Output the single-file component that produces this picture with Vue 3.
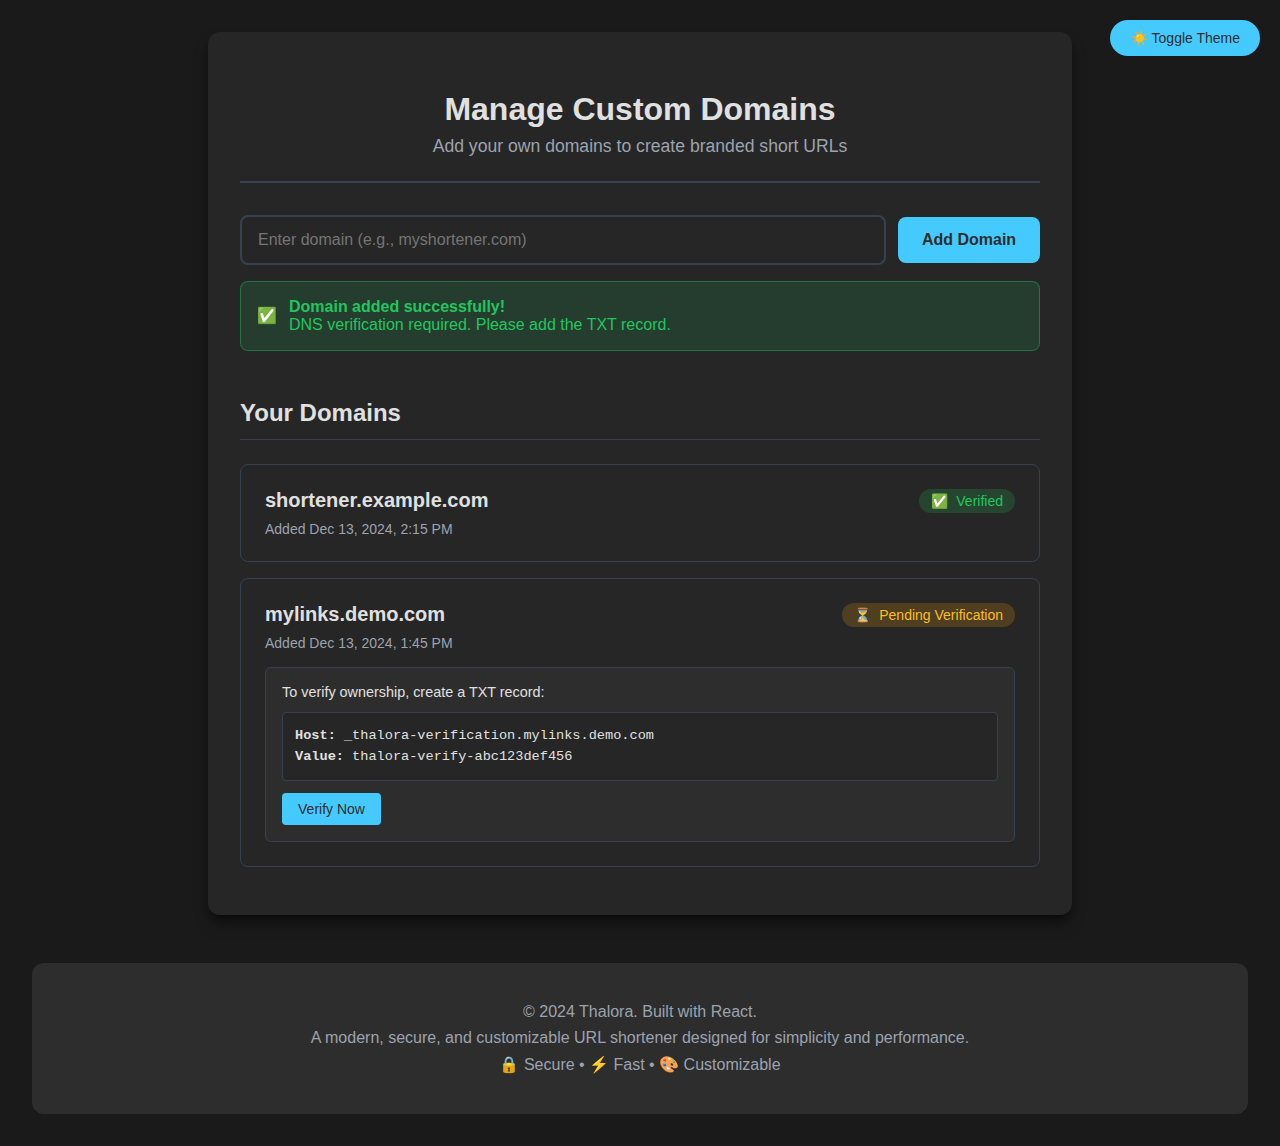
<script setup>
const domains = [
  { name: 'shortener.example.com', added: 'Added Dec 13, 2024, 2:15 PM', status: 'verified', icon: '✅', label: 'Verified' },
  {
    name: 'mylinks.demo.com', added: 'Added Dec 13, 2024, 1:45 PM', status: 'pending', icon: '⏳', label: 'Pending Verification',
    host: '_thalora-verification.mylinks.demo.com', value: 'thalora-verify-abc123def456'
  }
]
</script>

<template>
  <div class="page">
    <button class="toggle">☀️ Toggle Theme</button>
    <main class="panel">
      <header class="head">
        <h1>Manage Custom Domains</h1>
        <p>Add your own domains to create branded short URLs</p>
      </header>
      <form class="add" @submit.prevent>
        <input type="text" placeholder="Enter domain (e.g., myshortener.com)">
        <button>Add Domain</button>
      </form>
      <div class="alert">
        <span>✅</span>
        <div><strong>Domain added successfully!</strong><br>DNS verification required. Please add the TXT record.</div>
      </div>
      <h2>Your Domains</h2>
      <section v-for="d in domains" :key="d.name" class="card">
        <div class="row">
          <div>
            <h3>{{ d.name }}</h3>
            <p class="date">{{ d.added }}</p>
          </div>
          <span class="badge" :class="d.status"><span>{{ d.icon }}</span><span>{{ d.label }}</span></span>
        </div>
        <div v-if="d.host" class="verify">
          <p>To verify ownership, create a TXT record:</p>
          <div class="record">
            <div><strong>Host:</strong> {{ d.host }}</div>
            <div><strong>Value:</strong> {{ d.value }}</div>
          </div>
          <button>Verify Now</button>
        </div>
      </section>
    </main>
    <footer class="foot">
      <p>© 2024 Thalora. Built with React.</p>
      <p>A modern, secure, and customizable URL shortener designed for simplicity and performance.</p>
      <p>🔒 Secure • ⚡ Fast • 🎨 Customizable</p>
    </footer>
  </div>
</template>

<style>
body { margin: 0; background: #1a1a1a; }
</style>

<style scoped>
* { box-sizing: border-box; margin: 0; }
.page { min-height: 1146px; padding: 32px; background: #1a1a1a; color: #e0e0e0; font-family: "Liberation Sans", Arial, sans-serif; font-size: 16px; }
button { font-family: inherit; border: 0; background: #45caff; color: #2d2d2d; }
.toggle { position: absolute; top: 20px; right: 20px; width: 150px; height: 36px; border-radius: 25px; padding: 0 0 0 1px; font-size: 14px; }
.panel { width: 864px; height: 883px; margin: 0 auto; padding: 32px; border-radius: 12px; background: #262626; box-shadow: 0 10px 15px -3px rgba(0, 0, 0, .5), 0 4px 6px -2px rgba(0, 0, 0, .3); }
.head { height: 119px; padding-top: 27px; margin-top: 0; margin-bottom: 32px; border-bottom: 2px solid #374151; text-align: center; }
h1 { font-size: 32px; line-height: 37px; }
.head p { margin-top: 8px; font-size: 17.6px; line-height: 20px; color: #9ca3af; }
.add { display: flex; align-items: center; gap: 12px; }
.add input { flex: 1; height: 50px; padding: 0 16px; border: 2px solid #374151; border-radius: 8px; background: #262626; color: #e0e0e0; font: inherit; }
.add input::placeholder { color: #757575; }
.add button { width: 142px; height: 46px; padding: 0; border-radius: 8px; font-size: 16px; font-weight: 700; }
.alert { display: flex; align-items: center; gap: 12px; height: 70px; margin-top: 16px; padding: 0 16px; border: 1px solid rgba(34, 197, 94, .4); border-radius: 8px; background: rgba(34, 197, 94, .15); color: #22c55e; line-height: 18px; }
h2 { height: 41px; margin: 48px 0 24px; font-size: 24px; line-height: 28px; border-bottom: 1px solid #374151; }
.card { padding: 24px; margin-bottom: 16px; border: 1px solid #374151; border-radius: 8px; }
.row { display: flex; justify-content: space-between; align-items: flex-start; }
h3 { font-size: 20px; line-height: 23px; }
.date { margin-top: 9px; font-size: 14px; line-height: 16px; color: #9ca3af; }
.badge { display: flex; align-items: center; gap: 8px; height: 24px; padding: 0 12px; border-radius: 16px; font-size: 14px; }
.verified { background: rgba(34, 197, 94, .2); color: #22c55e; }
.pending { background: rgba(245, 158, 11, .2); color: #fbbf24; }
.verify { margin-top: 16px; padding: 16px; border: 1px solid #374151; border-radius: 6px; background: #2d2d2d; }
.verify p { font-size: 14.4px; line-height: 16px; }
.record { height: 69px; margin: 12px 0; padding: 12px; border: 1px solid #374151; border-radius: 4px; background: #262626; font-family: "Liberation Mono", monospace; font-size: 13.6px; line-height: 21px; }
.verify button { display: block; width: 99px; height: 32px; padding: 0; border-radius: 4px; font-size: 14px; }
.foot { height: 151px; margin-top: 48px; padding: 36px 32px; border-radius: 12px; background: #2d2d2d; color: #9ca3af; text-align: center; }
.foot p { height: 26.4px; line-height: 26.4px; }
</style>
